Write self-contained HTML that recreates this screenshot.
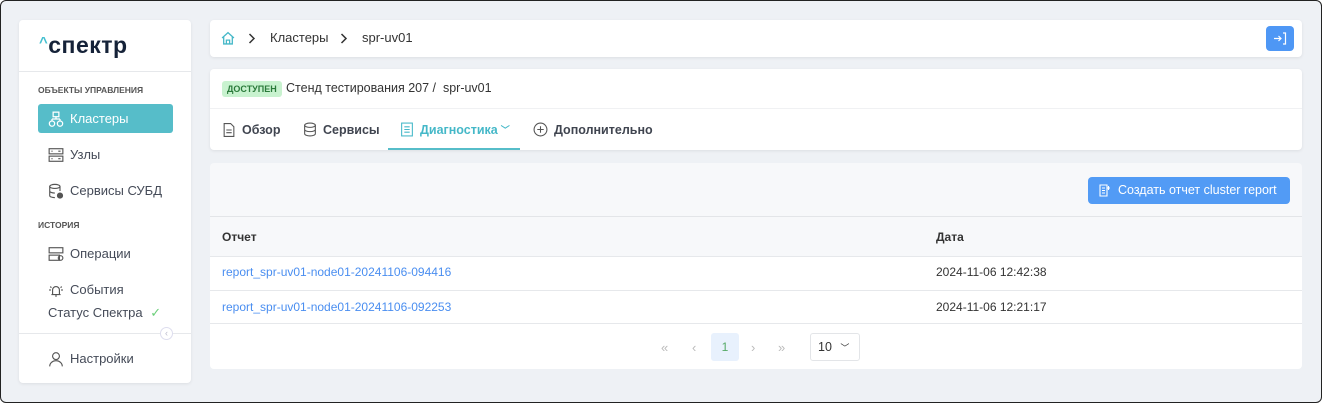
<!DOCTYPE html><html><head><meta charset="utf-8"><style>
*{box-sizing:border-box;margin:0;padding:0}
body{width:1323px;height:404px;background:#fff;font-family:"Liberation Sans",sans-serif;overflow:hidden;position:relative}
.frame{position:absolute;left:0;top:0;width:1322px;height:403px;border:1.5px solid #222;border-radius:6px;background:#eef1f5}
.card{position:absolute;background:#fff;border-radius:4px;box-shadow:0 1px 3px rgba(0,0,0,.08)}
.t{position:absolute;white-space:nowrap}
.side .it{position:absolute;left:19px;width:135px;height:29px;display:flex;align-items:center;padding-left:10px;font-size:13px;color:#454b58}
.side .it svg{margin-right:6px}
.sec{position:absolute;left:19px;font-size:8.5px;font-weight:bold;color:#555}
.tab{position:absolute;top:122px;font-size:12.5px;font-weight:bold;color:#404550;display:flex;align-items:center}
.tab svg{margin-right:6px}
a{color:#4a8ef0;text-decoration:none}
</style></head><body><div class="frame"></div>
<div class="card side" style="left:19px;top:20px;width:172px;height:363px">
 <div class="t" style="left:20px;top:12px;font-size:23px;font-weight:bold;color:#152238;letter-spacing:.5px"><span style="color:#45c0d0;font-size:15px;vertical-align:6px">^</span>спектр</div>
 <div style="position:absolute;left:0;right:0;top:51px;border-top:1px solid #e6e8eb"></div>
 <div class="sec" style="top:65px">ОБЪЕКТЫ УПРАВЛЕНИЯ</div>
 <div class="it" style="top:84px;background:#56bdc9;color:#fff;border-radius:3px"><svg width="16" height="16" viewBox="0 0 14 14" fill="none" stroke="#fff" stroke-width="1.1"><rect x="4.5" y="1" width="5" height="4"/><path d="M7 5v2M3.5 7h7M3.5 7v2M10.5 7v2"/><circle cx="3.5" cy="11" r="2.3"/><circle cx="10.5" cy="11" r="2.3"/></svg>Кластеры</div>
 <div class="it" style="top:120px"><svg width="16" height="16" viewBox="0 0 14 14" fill="none" stroke="#555" stroke-width="1"><rect x="1" y="1.5" width="12" height="4.5"/><rect x="1" y="8" width="12" height="4.5"/><path d="M3 3.7h1M3 10.2h1M9 3.7h2M9 10.2h2"/></svg>Узлы</div>
 <div class="it" style="top:156px"><svg width="16" height="16" viewBox="0 0 14 14" fill="none" stroke="#555" stroke-width="1"><ellipse cx="6" cy="3" rx="4.5" ry="1.8"/><path d="M1.5 3v8c0 1 2 1.8 4.5 1.8M10.5 3v4M1.5 7c0 1 2 1.8 4.5 1.8"/><circle cx="10.5" cy="11" r="2.2" fill="#555"/></svg>Сервисы СУБД</div>
 <div class="sec" style="top:200px">ИСТОРИЯ</div>
 <div class="it" style="top:219px"><svg width="16" height="16" viewBox="0 0 14 14" fill="none" stroke="#555" stroke-width="1"><rect x="1" y="1.5" width="12" height="4.5"/><rect x="1" y="8" width="9" height="4.5"/><circle cx="11" cy="10.5" r="2"/></svg>Операции</div>
 <div class="it" style="top:255px"><svg width="16" height="16" viewBox="0 0 14 14" fill="none" stroke="#555" stroke-width="1"><path d="M4 11V7a3 3 0 0 1 6 0v4zM3 11h8M7 11v2M2 4l1 1M12 4l-1 1M1 7h1.5M13 7h-1.5"/></svg>События</div>
 <div class="t" style="left:29px;top:285px;font-size:13px;color:#454b58">Статус Спектра <span style="color:#6ccf7a;margin-left:4px">✓</span></div>
 <div style="position:absolute;left:0;right:0;top:313px;border-top:1px solid #e6e8eb"></div>
 <div style="position:absolute;left:141px;top:307px;width:13px;height:13px;border:1px solid #dde;border-radius:50%;background:#fff;font-size:9px;color:#bbc;text-align:center;line-height:11px">‹</div>
 <div class="it" style="top:324px"><svg width="16" height="16" viewBox="0 0 14 14" fill="none" stroke="#555" stroke-width="1"><circle cx="7" cy="4.5" r="3"/><path d="M1.5 13.5c0-3 2.5-5 5.5-5s5.5 2 5.5 5"/></svg>Настройки</div>
</div>
<div class="card" style="left:210px;top:20px;width:1092px;height:37px">
 <svg style="position:absolute;left:11px;top:11px" width="14" height="14" viewBox="0 0 13 13" fill="none" stroke="#45b8c8" stroke-width="1.2"><path d="M1 6.5L6.5 1.5 12 6.5M2.5 5.5V12h8V5.5M5 12V8.5h3V12"/></svg>
 <svg style="position:absolute;left:38px;top:13px" width="8" height="11" viewBox="0 0 8 11" fill="none" stroke="#333" stroke-width="1.5"><path d="M1.5 1l4.5 4.5L1.5 10"/></svg>
 <div class="t" style="left:60px;top:10px;font-size:13px;color:#333">Кластеры</div>
 <svg style="position:absolute;left:130px;top:13px" width="8" height="11" viewBox="0 0 8 11" fill="none" stroke="#333" stroke-width="1.5"><path d="M1.5 1l4.5 4.5L1.5 10"/></svg>
 <div class="t" style="left:152px;top:10px;font-size:13px;color:#333">spr-uv01</div>
 <div style="position:absolute;right:8px;top:6px;width:28px;height:25px;background:#4e97f5;border-radius:4px"><svg style="position:absolute;left:7px;top:6px" width="14" height="13" viewBox="0 0 14 13" fill="none" stroke="#fff" stroke-width="1.2"><path d="M1 6.5h7M5.5 4l2.5 2.5L5.5 9M10 1h2.5v11H10"/></svg></div>
</div>
<div class="card" style="left:210px;top:69px;width:1092px;height:81px">
 <div class="t" style="left:12px;top:12px;background:#c8f2cf;color:#2a7a3a;font-size:9px;font-weight:bold;padding:3px 5px;border-radius:3px">ДОСТУПЕН</div>
 <div class="t" style="left:76px;top:12px;font-size:12.5px;color:#333">Стенд тестирования 207 /&nbsp; spr-uv01</div>
 <div style="position:absolute;left:0;right:0;top:39px;border-top:1px solid #f0f1f3"></div>
</div>
<div class="tab" style="left:222px"><svg width="14" height="16" viewBox="0 0 13 14" fill="none" stroke="#555" stroke-width="1"><path d="M2 1h6l3 3v9H2zM4 7h5M4 9.5h5"/></svg>Обзор</div>
<div class="tab" style="left:303px"><svg width="14" height="15" viewBox="0 0 13 14" fill="none" stroke="#555" stroke-width="1"><ellipse cx="6.5" cy="3" rx="5" ry="2"/><path d="M1.5 3v8c0 1.1 2.2 2 5 2s5-.9 5-2V3M1.5 7c0 1.1 2.2 2 5 2s5-.9 5-2"/></svg>Сервисы</div>
<div class="tab" style="left:400px;color:#45b8c8"><svg width="14" height="15" viewBox="0 0 13 14" fill="none" stroke="#45b8c8" stroke-width="1"><rect x="1.5" y="1" width="10" height="12"/><path d="M4 4.5h5M4 7h5M4 9.5h5"/></svg>Диагностика <span style="font-size:9px;margin-left:3px">﹀</span></div>
<div style="position:absolute;left:388px;top:148px;width:132px;height:2px;background:#56bdc9"></div>
<div class="tab" style="left:533px"><svg width="15" height="15" viewBox="0 0 14 14" fill="none" stroke="#555" stroke-width="1"><circle cx="7" cy="7" r="6"/><path d="M7 4v6M4 7h6"/></svg>Дополнительно</div>
<div class="card" style="left:210px;top:163px;width:1092px;height:206px;background:#f7f8fa;box-shadow:none;overflow:hidden">
 <div style="position:absolute;right:12px;top:14px;width:202px;height:27px;background:#529bf5;border-radius:4px;color:#fff;font-size:12.5px;line-height:27px;padding-left:30px">Создать отчет cluster report<svg style="position:absolute;left:11px;top:7px" width="12" height="13" viewBox="0 0 12 13" fill="none" stroke="#fff" stroke-width="1.1"><path d="M1 1h7v11H1zM3 4h3M3 6.5h3M3 9h3M9.5 2v4M8 4h3"/></svg></div>
 <div style="position:absolute;left:0;right:0;top:53px;border-top:1px solid #e3e5e8"></div>
 <div class="t" style="left:12px;top:67px;font-size:12px;font-weight:bold;color:#333">Отчет</div>
 <div class="t" style="left:726px;top:67px;font-size:12px;font-weight:bold;color:#333">Дата</div>
 <div style="position:absolute;left:0;right:0;top:93px;bottom:0;background:#fff"></div>
 <div style="position:absolute;left:0;right:0;top:93px;border-top:1px solid #e6e8eb"></div>
 <div class="t" style="left:12px;top:102px;font-size:12px"><a>report_spr-uv01-node01-20241106-094416</a></div>
 <div class="t" style="left:726px;top:102px;font-size:12px;color:#333">2024-11-06 12:42:38</div>
 <div style="position:absolute;left:0;right:0;top:127px;border-top:1px solid #e6e8eb"></div>
 <div class="t" style="left:12px;top:137px;font-size:12px"><a>report_spr-uv01-node01-20241106-092253</a></div>
 <div class="t" style="left:726px;top:137px;font-size:12px;color:#333">2024-11-06 12:21:17</div>
 <div style="position:absolute;left:0;right:0;top:160px;border-top:1px solid #e6e8eb"></div>
 <div class="t" style="left:451px;top:177px;font-size:13px;color:#bbb">«</div>
 <div class="t" style="left:482px;top:177px;font-size:13px;color:#bbb">‹</div>
 <div style="position:absolute;left:501px;top:170px;width:28px;height:28px;background:#e8f1fd;border-radius:3px;text-align:center;line-height:28px;font-size:12px;color:#5a6">1</div>
 <div class="t" style="left:541px;top:177px;font-size:13px;color:#bbb">›</div>
 <div class="t" style="left:568px;top:177px;font-size:13px;color:#bbb">»</div>
 <div style="position:absolute;left:600px;top:170px;width:50px;height:28px;border:1px solid #e3e5e8;border-radius:3px;font-size:12.5px;color:#333;line-height:26px;padding-left:7px">10 <span style="font-size:9px;margin-left:5px">﹀</span></div>
</div>
</body></html>
